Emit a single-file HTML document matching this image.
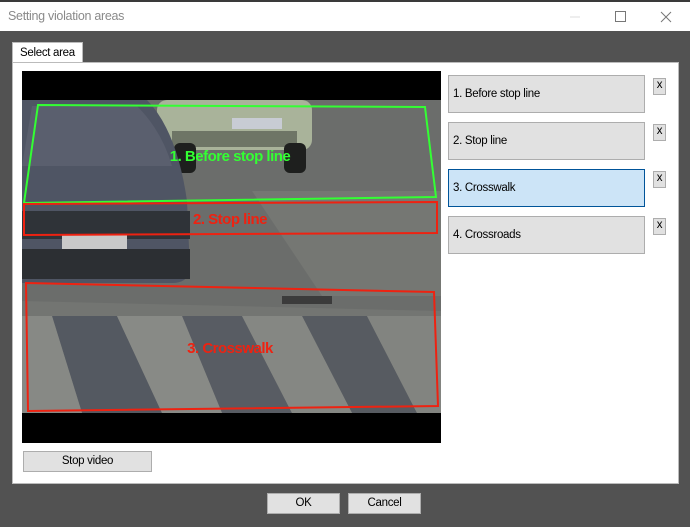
<!DOCTYPE html>
<html><head><meta charset="utf-8"><style>
body{margin:0;width:690px;height:527px;background:#525252;position:relative;overflow:hidden;font-family:"Liberation Sans",sans-serif;font-size:11.5px;letter-spacing:-0.3px}
.title{position:absolute;left:0;top:2px;width:690px;height:29px;background:#fff}
.topline{position:absolute;left:0;top:0;width:690px;height:2px;background:#3a3a3a}
.title span{position:absolute;left:8px;top:7px;color:#8a8a8a;font-size:12.5px}
.tab{position:absolute;left:12px;top:42px;width:69px;height:21px;background:#fff;border:1px solid #bbb;border-bottom:none}
.tab span{position:absolute;left:7px;top:4px;color:#000}
.panel{position:absolute;left:12px;top:62px;width:665px;height:420px;background:#fff;border:1px solid #bbb}
.btn{position:absolute;background:#e1e1e1;border:1px solid #adadad;box-sizing:border-box;color:#000}
.area{left:448px;width:197px;height:38px;padding:12px 0 0 4px}
.x{left:653px;width:13px;height:17px;text-align:center;line-height:13px}
</style></head><body>
<div class="topline"></div>
<div class="title"><span>Setting violation areas</span>
<svg style="position:absolute;left:560px;top:0" width="130" height="29"><line x1="10" y1="15" x2="20" y2="15" stroke="#ddd"/><rect x="55.5" y="9.5" width="10" height="10" fill="none" stroke="#777"/><path d="M101 10L111 20M111 10L101 20" stroke="#777"/></svg></div>
<div class="tab"><span>Select area</span></div>
<div class="panel"></div>
<svg style="position:absolute;left:22px;top:71px" width="419" height="372" viewBox="0 0 419 372">
<rect width="419" height="372" fill="#000"/>
<rect y="29" width="419" height="313" fill="#6b6d6b"/>
<polygon points="0,230 419,240 419,342 0,342" fill="#737572"/>
<polygon points="30,245 95,245 140,342 60,342" fill="#545961"/>
<polygon points="160,245 220,245 270,342 200,342" fill="#585c63"/>
<polygon points="280,245 345,245 395,342 330,342" fill="#575b61"/>
<polygon points="0,245 30,245 60,342 0,342" fill="#878985"/>
<polygon points="95,245 160,245 200,342 140,342" fill="#888a86"/>
<polygon points="220,245 280,245 330,342 270,342" fill="#858783"/>
<polygon points="345,245 419,245 419,342 395,342" fill="#828480"/>
<polygon points="230,120 419,120 419,225 300,225" fill="#757773"/>
<rect x="135" y="29" width="155" height="50" rx="10" fill="#a9b39a"/>
<rect x="150" y="60" width="125" height="16" fill="#6e7566"/>
<rect x="210" y="47" width="50" height="11" fill="#c8ccd4"/>
<rect x="152" y="72" width="22" height="30" rx="6" fill="#1e1f1e"/>
<rect x="262" y="72" width="22" height="30" rx="6" fill="#1e1f1e"/>
<path d="M0 29 H125 Q155 60 165 130 L168 200 Q165 212 150 212 L0 212 Z" fill="#4f5564"/>
<path d="M10 35 H115 Q140 60 150 95 L0 95 Z" fill="#5a5f6e"/>
<rect x="0" y="140" width="168" height="28" fill="#2f3338"/>
<rect x="40" y="163" width="65" height="15" fill="#c9c9c9"/>
<rect x="0" y="178" width="168" height="30" fill="#2c2f33"/>
<rect x="260" y="225" width="50" height="8" fill="#3b3b3b"/>
<polygon points="16,34 403,36 414,126 2,132" fill="none" stroke="#3f3" stroke-width="2"/>
<polygon points="2,133 415,131 415,162 2,164" fill="none" stroke="#e21" stroke-width="2"/>
<polygon points="4,212 412,221 416,335 6,340" fill="none" stroke="#e21" stroke-width="2"/>
<g font-family="Liberation Sans,sans-serif" font-weight="bold" font-size="15" text-anchor="middle" letter-spacing="-0.5">
<text x="208" y="90" fill="#3f3">1. Before stop line</text>
<text x="208" y="153" fill="#e21">2. Stop line</text>
<text x="208" y="282" fill="#e21">3. Crosswalk</text></g>
</svg>
<div class="btn area" style="top:75px">1. Before stop line</div>
<div class="btn area" style="top:122px">2. Stop line</div>
<div class="btn area" style="top:169px;background:#cce4f7;border-color:#005499">3. Crosswalk</div>
<div class="btn area" style="top:216px">4. Crossroads</div>
<div class="btn x" style="top:78px">x</div>
<div class="btn x" style="top:124px">x</div>
<div class="btn x" style="top:171px">x</div>
<div class="btn x" style="top:218px">x</div>
<div class="btn" style="left:23px;top:451px;width:129px;height:21px;text-align:center;line-height:19px">Stop video</div>
<div class="btn" style="left:267px;top:493px;width:73px;height:21px;text-align:center;line-height:19px">OK</div>
<div class="btn" style="left:348px;top:493px;width:73px;height:21px;text-align:center;line-height:19px">Cancel</div>
</body></html>
